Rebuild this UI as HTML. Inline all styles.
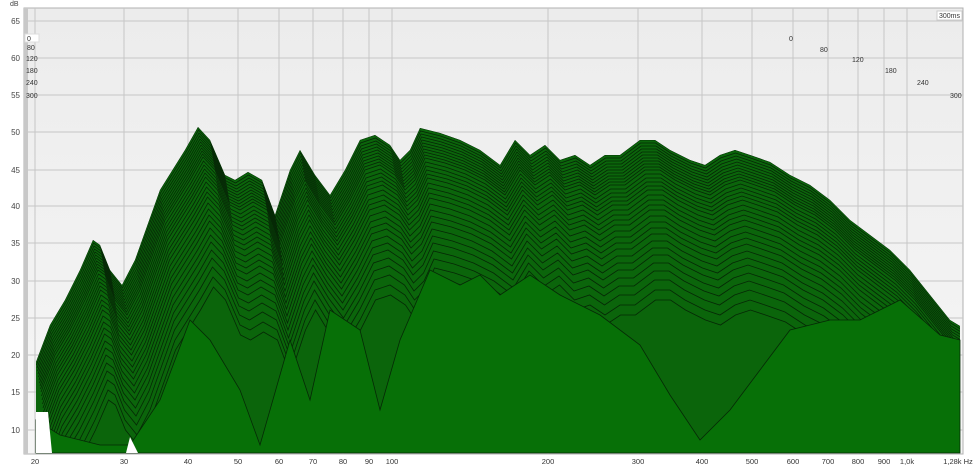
<!DOCTYPE html>
<html><head><style>
html,body{margin:0;padding:0;background:#fff;width:975px;height:468px;overflow:hidden;}
svg{display:block;font-family:"Liberation Sans",sans-serif;}
</style></head><body>
<svg width="975" height="468" viewBox="0 0 975 468" xmlns="http://www.w3.org/2000/svg">
<defs>
<linearGradient id="bg" x1="0" y1="0" x2="0" y2="1"><stop offset="0" stop-color="#ececec"/><stop offset="1" stop-color="#f6f6f6"/></linearGradient>
<path id="env" d="M36,362 L50,325 65,300 80,270 93,240 100,245 110,270 122,285 135,260 160,190 185,150 198,127 210,140 225,175 235,180 248,172 262,180 275,215 290,170 300,150 315,175 330,195 345,170 360,140 375,135 390,145 400,160 410,150 420,128 440,133 460,140 480,150 500,165 515,140 530,155 545,145 560,160 575,155 590,165 605,155 620,155 640,140 655,140 670,150 690,160 705,165 720,155 735,150 750,155 770,162 790,175 810,185 830,200 850,220 870,235 890,250 910,270 930,295 950,320 960,326"/>
<clipPath id="envclip"><path d="M36,362 L50,325 65,300 80,270 93,240 100,245 110,270 122,285 135,260 160,190 185,150 198,127 210,140 225,175 235,180 248,172 262,180 275,215 290,170 300,150 315,175 330,195 345,170 360,140 375,135 390,145 400,160 410,150 420,128 440,133 460,140 480,150 500,165 515,140 530,155 545,145 560,160 575,155 590,165 605,155 620,155 640,140 655,140 670,150 690,160 705,165 720,155 735,150 750,155 770,162 790,175 810,185 830,200 850,220 870,235 890,250 910,270 930,295 950,320 960,326 L960,453 L36,453 Z"/></clipPath>
</defs>
<rect x="0" y="0" width="975" height="468" fill="#fff"/>
<rect x="24" y="8" width="939" height="446" fill="url(#bg)" stroke="#b0b0b0"/>
<rect x="24" y="8" width="4" height="446" fill="#c8c8c8"/>
<g stroke="#c6c6c6" stroke-width="1">
<line x1="28" y1="21" x2="963" y2="21"/><line x1="28" y1="58" x2="963" y2="58"/><line x1="28" y1="95" x2="963" y2="95"/><line x1="28" y1="132" x2="963" y2="132"/><line x1="28" y1="170" x2="963" y2="170"/><line x1="28" y1="206" x2="963" y2="206"/><line x1="28" y1="243" x2="963" y2="243"/><line x1="28" y1="281" x2="963" y2="281"/><line x1="28" y1="318" x2="963" y2="318"/><line x1="28" y1="355" x2="963" y2="355"/><line x1="28" y1="392" x2="963" y2="392"/><line x1="28" y1="430" x2="963" y2="430"/>
<line x1="35" y1="8" x2="35" y2="454"/><line x1="124" y1="8" x2="124" y2="454"/><line x1="188" y1="8" x2="188" y2="454"/><line x1="238" y1="8" x2="238" y2="454"/><line x1="279" y1="8" x2="279" y2="454"/><line x1="313" y1="8" x2="313" y2="454"/><line x1="343" y1="8" x2="343" y2="454"/><line x1="369" y1="8" x2="369" y2="454"/><line x1="392" y1="8" x2="392" y2="454"/><line x1="548" y1="8" x2="548" y2="454"/><line x1="638" y1="8" x2="638" y2="454"/><line x1="702" y1="8" x2="702" y2="454"/><line x1="752" y1="8" x2="752" y2="454"/><line x1="793" y1="8" x2="793" y2="454"/><line x1="828" y1="8" x2="828" y2="454"/><line x1="858" y1="8" x2="858" y2="454"/><line x1="884" y1="8" x2="884" y2="454"/><line x1="907" y1="8" x2="907" y2="454"/>
</g>
<g fill="#444" font-size="8" text-anchor="end">
<text x="20" y="24">65</text><text x="20" y="61">60</text><text x="20" y="98">55</text><text x="20" y="135">50</text><text x="20" y="173">45</text><text x="20" y="209">40</text><text x="20" y="246">35</text><text x="20" y="284">30</text><text x="20" y="321">25</text><text x="20" y="358">20</text><text x="20" y="395">15</text><text x="20" y="433">10</text>
</g>
<text x="10" y="6" font-size="7" fill="#444">dB</text>
<g font-size="7" fill="#333">
<rect x="25" y="34" width="14" height="8" fill="#fff" stroke="#ddd"/><text x="27" y="41">0</text>
<text x="27" y="50">80</text><text x="26" y="61">120</text><text x="26" y="73">180</text><text x="26" y="85">240</text><text x="26" y="98">300</text>
<text x="789" y="41">0</text><text x="820" y="52">80</text><text x="852" y="62">120</text><text x="885" y="73">180</text><text x="917" y="85">240</text><text x="950" y="98">300</text>
<rect x="937" y="11" width="25" height="9" fill="#fff" stroke="#ccc"/><text x="939" y="18">300ms</text>
</g>
<path d="M36,362 L50,325 65,300 80,270 93,240 100,245 110,270 122,285 135,260 160,190 185,150 198,127 210,140 225,175 235,180 248,172 262,180 275,215 290,170 300,150 315,175 330,195 345,170 360,140 375,135 390,145 400,160 410,150 420,128 440,133 460,140 480,150 500,165 515,140 530,155 545,145 560,160 575,155 590,165 605,155 620,155 640,140 655,140 670,150 690,160 705,165 720,155 735,150 750,155 770,162 790,175 810,185 830,200 850,220 870,235 890,250 910,270 930,295 950,320 960,326 L960,453 L36,453 Z" fill="#0b650b"/>
<g clip-path="url(#envclip)" fill="none" stroke="#062806" stroke-width="0.8">
<use href="#env"/><use href="#env" transform="translate(0.5,3)"/><use href="#env" transform="translate(1,6)"/><use href="#env" transform="translate(1.5,9)"/><use href="#env" transform="translate(2,12)"/><use href="#env" transform="translate(2.5,15)"/><use href="#env" transform="translate(3,18)"/><use href="#env" transform="translate(3.5,21)"/><use href="#env" transform="translate(4,24)"/><use href="#env" transform="translate(4.5,27)"/><use href="#env" transform="translate(5,30)"/><use href="#env" transform="translate(5.5,34)"/><use href="#env" transform="translate(6,38)"/><use href="#env" transform="translate(6.5,42)"/><use href="#env" transform="translate(7,46)"/><use href="#env" transform="translate(7.5,50)"/><use href="#env" transform="translate(8,55)"/><use href="#env" transform="translate(8.5,60)"/><use href="#env" transform="translate(9,65)"/><use href="#env" transform="translate(9.5,70)"/><use href="#env" transform="translate(10,76)"/><use href="#env" transform="translate(10.5,82)"/><use href="#env" transform="translate(11,88)"/><use href="#env" transform="translate(11.5,94)"/><use href="#env" transform="translate(12,101)"/><use href="#env" transform="translate(12.5,108)"/><use href="#env" transform="translate(13,115)"/><use href="#env" transform="translate(13.5,123)"/><use href="#env" transform="translate(14,131)"/><use href="#env" transform="translate(14.5,140)"/><use href="#env" transform="translate(15,150)"/><use href="#env" transform="translate(15.5,160)"/>
</g>
<path d="M36,420 L60,435 100,445 130,445 160,400 190,320 210,340 240,390 260,445 290,340 310,400 330,310 360,330 380,410 400,340 430,270 460,285 480,275 500,295 530,275 560,295 600,315 640,345 670,395 700,440 730,410 760,370 790,330 830,320 860,320 900,300 940,335 960,340 L960,453 L36,453 Z" fill="#077007" stroke="#062806" stroke-width="0.8"/>
<path d="M36,412 L48,412 52,453 36,453 Z M130,437 L138,453 126,453 Z" fill="#fff"/>
<g font-size="7.5" fill="#333" text-anchor="middle">
<text x="35" y="464">20</text><text x="124" y="464">30</text><text x="188" y="464">40</text><text x="238" y="464">50</text><text x="279" y="464">60</text><text x="313" y="464">70</text><text x="343" y="464">80</text><text x="369" y="464">90</text><text x="392" y="464">100</text><text x="548" y="464">200</text><text x="638" y="464">300</text><text x="702" y="464">400</text><text x="752" y="464">500</text><text x="793" y="464">600</text><text x="828" y="464">700</text><text x="858" y="464">800</text><text x="884" y="464">900</text><text x="907" y="464">1,0k</text><text x="958" y="464">1,28k Hz</text>
</g>
</svg>
</body></html>
